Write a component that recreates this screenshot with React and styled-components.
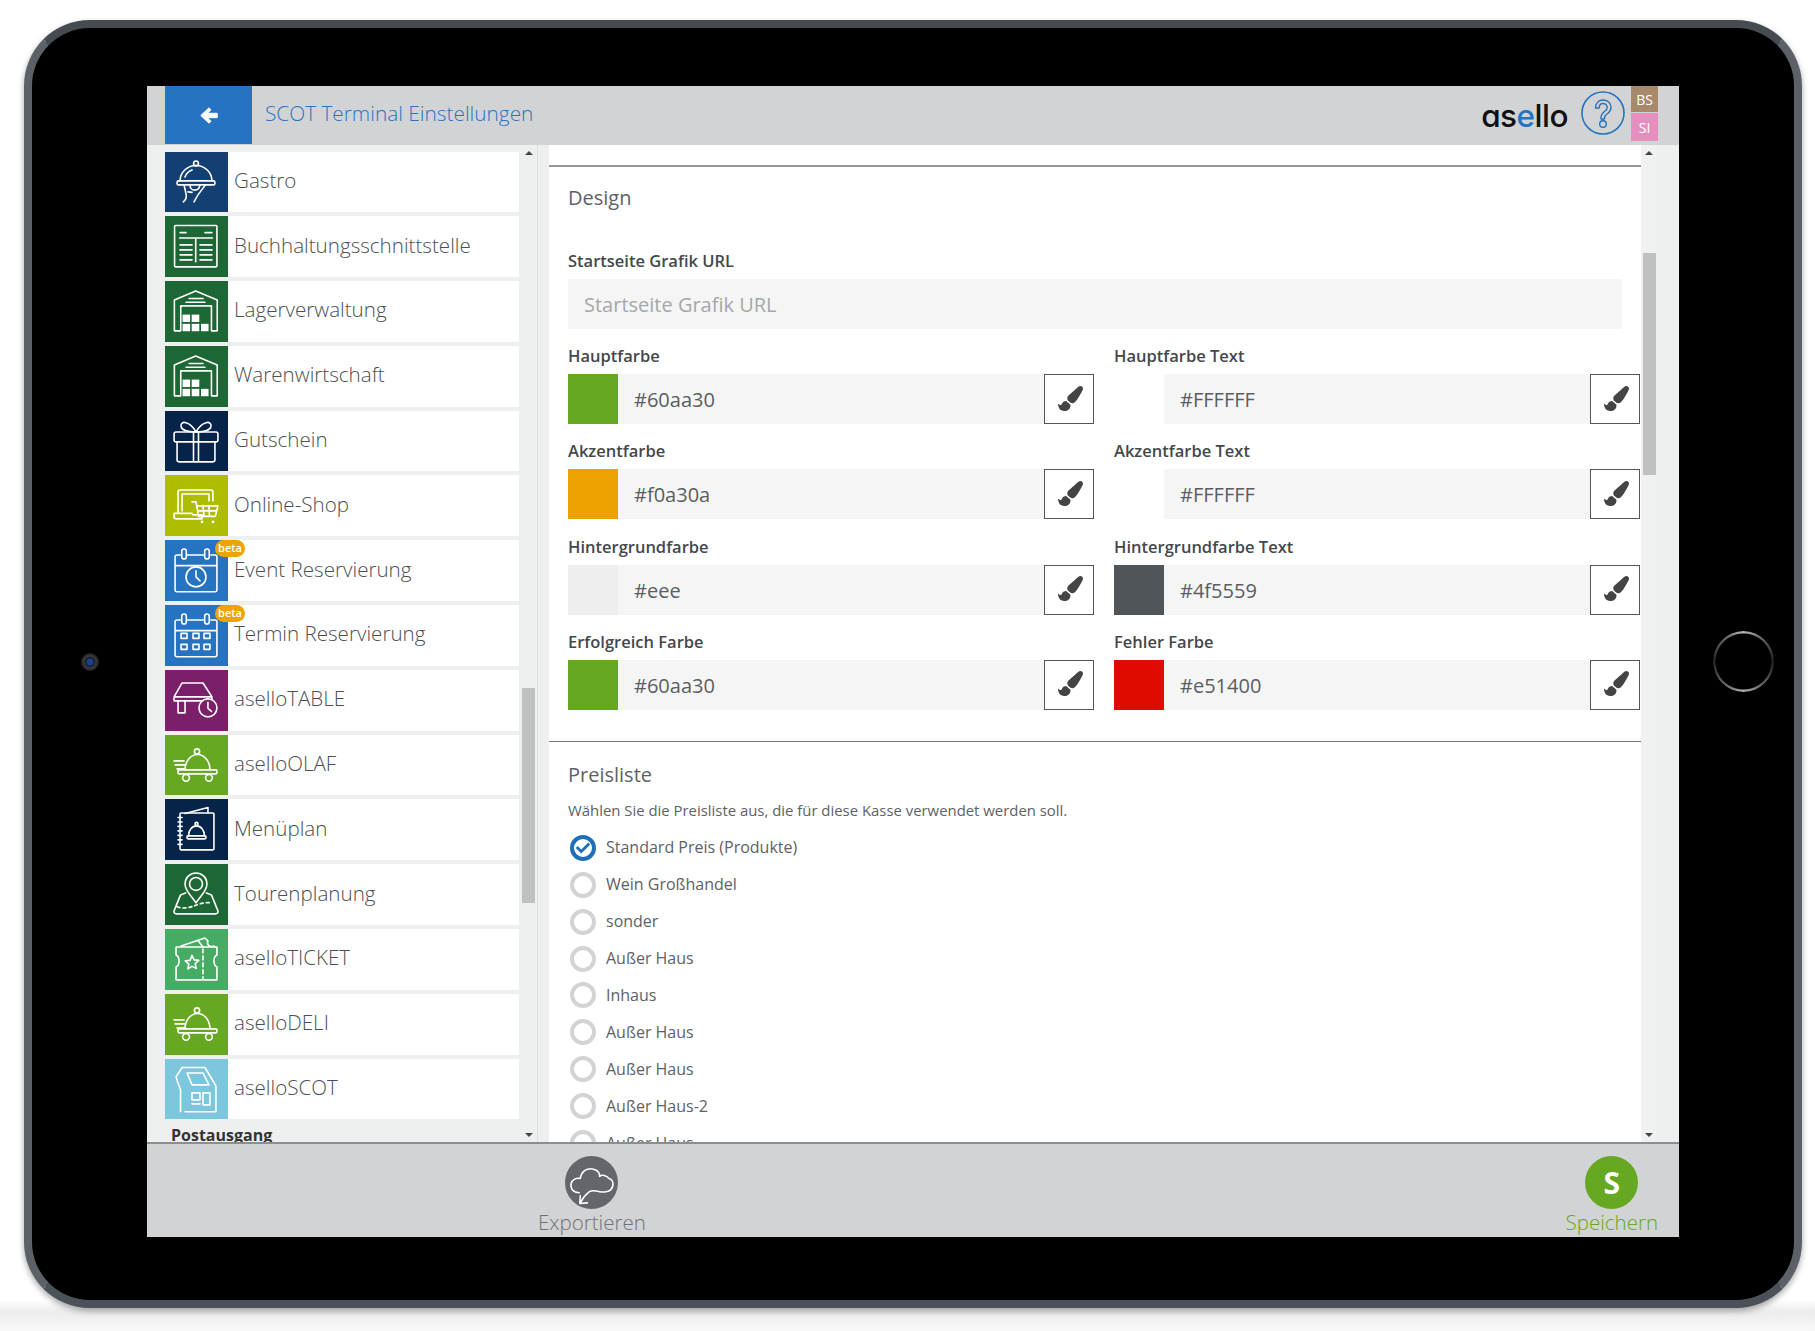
import React from 'react';
import styled, { createGlobalStyle } from 'styled-components';
import { FaPaintBrush, FaCheck } from 'react-icons/fa';

const Global = createGlobalStyle`
  html, body { margin: 0; padding: 0; background: #fff; }
  body { font-family: "Open Sans", "Liberation Sans", sans-serif; color: #4f5559; overflow: hidden; }
  * { box-sizing: border-box; }
`;

const Page = styled.div`
  width: 1815px;
  height: 1331px;
  padding: 20px 13px 0 24px;
  overflow: hidden;
  background: linear-gradient(to bottom, #fff 1300px, #ececec 1312px, #f8f8f8 1331px);
`;
const Tablet = styled.div`
  width: 1778px;
  height: 1288px;
  border-radius: 66px;
  border: 8px solid #5b6167;
  border-top-color: #454b51;
  border-bottom-color: #4a5158;
  background: #000;
  display: grid;
  grid-template-columns: 115px 1532px 1fr;
  padding: 58px 0 63px;
  box-shadow: 0 3px 6px rgba(0,0,0,.35);
`;
const Bezel = styled.div`
  display: flex;
  align-items: center;
  justify-content: center;
  padding-left: ${p => p.$shift || 0}px;
`;
const Camera = styled.div`
  width: 18px;
  height: 18px;
  border-radius: 50%;
  background: radial-gradient(circle, #1c3f86 0 3px, #101a2e 4px, #3b3b3b 6px, #1c1c1c 9px);
`;
const HomeRing = styled.div`
  width: 61px;
  height: 61px;
  border-radius: 50%;
  background: conic-gradient(#b5b5b5 0deg, #6a6a6a 35deg, #202020 90deg, #6a6a6a 145deg, #b0b0b0 180deg, #6a6a6a 215deg, #262626 270deg, #6a6a6a 325deg, #b5b5b5 360deg);
  -webkit-mask: radial-gradient(circle, transparent 27.5px, #000 28.5px);
  mask: radial-gradient(circle, transparent 27.5px, #000 28.5px);
`;
const Screen = styled.div`
  display: flex;
  flex-direction: column;
  height: 1151px;
  background: #eef0ef;
  overflow: hidden;
`;
const Header = styled.header`
  flex: 0 0 59px;
  display: flex;
  align-items: stretch;
  padding: 0 21px 0 18px;
  background: #d2d3d5;
`;
const BackButton = styled.div`
  width: 87px;
  height: 58px;
  background: #2673c1;
  display: flex;
  align-items: center;
  justify-content: center;
  svg { display: block; }
`;
const Title = styled.div`
  flex: 1;
  padding-left: 13px;
  font-size: 20.8px;
  line-height: 55px;
  color: #2a73bf;
  font-weight: 300;
`;
const Logo = styled.div`
  font-family: Inter, "Open Sans", sans-serif;
  font-feature-settings: "cv11";
  font-weight: 500;
  font-size: 31.5px;
  letter-spacing: -0.5px;
  color: #111;
  line-height: 58px;
  padding-top: 1px;
  span { color: #2673c1; }
`;
const Help = styled.svg`
  width: 44px;
  height: 44px;
  margin: 5px 0 0 13px;
`;
const Badges = styled.div`
  display: flex;
  flex-direction: column;
  gap: 1px;
  margin-left: 6px;
  width: 27px;
`;
const Badge = styled.div`
  height: ${p => p.$h}px;
  background: ${p => p.$c};
  color: #fff;
  font-size: 14px;
  display: flex;
  align-items: center;
  justify-content: center;
`;
const Main = styled.div`
  flex: 0 0 997px;
  display: flex;
  min-height: 0;
  overflow: hidden;
`;
const Sidebar = styled.aside`
  flex: 0 0 354px;
  margin-left: 18px;
  padding: 6.5px 0 0;
  overflow: hidden;
`;
const MenuList = styled.div`
  display: flex;
  flex-direction: column;
  gap: 4px;
`;
const MenuRow = styled.div`
  position: relative;
  height: 60.8px;
  background: #fff;
  display: flex;
  align-items: center;
  font-size: 20.6px;
  font-weight: 300;
  color: #4b5054;
`;
const Tile = styled.div`
  flex: 0 0 63px;
  height: 100%;
  background: ${p => p.$c};
  margin-right: 6px;
  svg { display: block; width: 63px; height: 100%; }
`;
const RowLabel = styled.span`
  padding-bottom: 4px;
`;
const Beta = styled.span`
  position: absolute;
  left: 50px;
  top: 0;
  width: 30px;
  height: 17px;
  border-radius: 9px;
  background: #eca400;
  color: #fff;
  font-size: 11px;
  font-weight: 600;
  line-height: 15px;
  text-align: center;
`;
const Postausgang = styled.div`
  font-size: 16px;
  font-weight: 700;
  color: #333;
  padding: 5px 0 0 6px;
  line-height: 22px;
`;
const Track = styled.div`
  position: relative;
  flex: 0 0 ${p => p.$w}px;
  background: ${p => p.$bg};
  border-right: ${p => p.$line ? '1px solid #e0e2e2' : 'none'};
`;
const Thumb = styled.div`
  position: absolute;
  left: ${p => p.$l}px;
  top: ${p => p.$t}px;
  width: 13px;
  height: ${p => p.$h}px;
  background: #bfc0c0;
`;
const Arrow = styled.div`
  position: absolute;
  left: ${p => p.$l}px;
  ${p => p.$down ? 'bottom: 5px;' : 'top: 6px;'}
  width: 0;
  height: 0;
  border-left: 4px solid transparent;
  border-right: 4px solid transparent;
  ${p => p.$down ? 'border-top: 4px solid #444;' : 'border-bottom: 4px solid #444;'}
`;
const Gutter = styled.div`
  flex: 0 0 ${p => p.$w}px;
`;
const Pane = styled.main`
  flex: 0 0 1092px;
  background: #fff;
  padding-top: 20px;
  overflow: hidden;
`;
const Section = styled.section`
  margin-top: ${p => p.$mt || 0}px;
  padding: ${p => p.$pt}px 0 0 19px;
  border-top: ${p => p.$thin ? 1 : 2}px solid ${p => p.$thin ? '#77797b' : '#98999b'};
`;
const SectionTitle = styled.h2`
  margin: 0;
  font-size: 20px;
  font-weight: 400;
  line-height: 28px;
  color: #5d6266;
`;
const FieldLabel = styled.div`
  font-size: 16.5px;
  font-weight: 600;
  line-height: 22px;
  color: #43484c;
  margin-bottom: 7px;
`;
const UrlLabel = styled(FieldLabel)`
  margin: 38px 0 7px;
`;
const UrlInput = styled.div`
  width: 1054px;
  height: 50px;
  background: #f5f5f5;
  color: #a5a7a9;
  font-size: 20px;
  line-height: 52px;
  padding-left: 16px;
`;
const Colors = styled.div`
  display: grid;
  grid-template-columns: 526px 526px;
  column-gap: 20px;
  row-gap: 16.3px;
  margin-top: 16px;
`;
const ColorRow = styled.div`
  display: flex;
  height: 50px;
`;
const Swatch = styled.div`
  flex: 0 0 50px;
  background: ${p => p.$c};
`;
const ColorValue = styled.div`
  flex: 1;
  background: #f5f5f5;
  font-size: 20px;
  line-height: 52px;
  padding-left: 16px;
  color: #595e62;
`;
const BrushButton = styled.div`
  flex: 0 0 50px;
  border: 1.5px solid #555;
  background: #fff;
  color: #444;
  display: flex;
  align-items: center;
  justify-content: center;
  padding: 0 0 2px 3px;
  font-size: 25px;
`;
const Hint = styled.p`
  margin: 10px 0 0;
  font-size: 14.9px;
  line-height: 22px;
  color: #5d6266;
`;
const Radios = styled.div`
  display: flex;
  flex-direction: column;
  gap: 10.9px;
  margin-top: 14px;
  padding-left: 2px;
`;
const RadioRow = styled.div`
  display: flex;
  align-items: center;
  height: 26px;
  gap: 10px;
  font-size: 16px;
  color: #5d6266;
`;
const RadioText = styled.span`
  padding-bottom: 1px;
`;
const RadioDot = styled.span`
  flex: 0 0 26px;
  height: 26px;
  border-radius: 50%;
  border: 4px solid ${p => p.$on ? '#1e6fb8' : '#d2d3d5'};
  color: #1e6fb8;
  display: flex;
  align-items: center;
  justify-content: center;
  font-size: 14px;
`;
const Footer = styled.footer`
  flex: 1;
  border-top: 2px solid #8b8d8f;
  background: #d2d3d5;
  display: flex;
  justify-content: space-between;
  padding: 12px 21px 0 391px;
`;
const Action = styled.div`
  display: flex;
  flex-direction: column;
  align-items: center;
  font-size: 20.5px;
  font-weight: 300;
  line-height: 26px;
  color: ${p => p.$c};
`;
const ActionCircle = styled.div`
  width: 53px;
  height: 53px;
  border-radius: 50%;
  background: ${p => p.$c};
  color: #fff;
  font-size: 30px;
  font-weight: 700;
  display: flex;
  align-items: center;
  justify-content: center;
  svg { display: block; }
`;

const S = ({ children }) => (
  <svg viewBox="0 0 63 61" fill="none" stroke="#fff" strokeWidth="1.6" strokeLinecap="round" strokeLinejoin="round">{children}</svg>
);
const F = { fill: '#fff', stroke: 'none' };

const Cloche = () => (
  <>
    <path d="M9 26h10M10 30h10M12 34h8" />
    <circle cx="32" cy="16.5" r="2.6" />
    <path d="M20 35a12.5 15.5 0 0 1 25 0" />
    <rect x="13" y="35" width="39" height="4" rx="1" />
    <circle cx="21" cy="43" r="3.4" />
    <circle cx="44" cy="43" r="3.4" />
  </>
);
const Warehouse = () => (
  <>
    <path d="M9.3 50V19L30.7 10 52.3 19V50H46.5V25H15.7V50Z" />
    <path d="M24 17.5h14M21 21.3h19" />
    <g style={F}>
      <rect x="17.5" y="33.7" width="7.6" height="7.4" />
      <rect x="26.7" y="33.7" width="7.6" height="7.4" />
      <rect x="17.5" y="43" width="7.6" height="7.4" />
      <rect x="26.7" y="43" width="7.6" height="7.4" />
      <rect x="36" y="43" width="7.6" height="7.4" />
    </g>
  </>
);
const CalBase = () => (
  <>
    <path d="M15.5 15H12a2 2 0 0 0-2 2V50a2 2 0 0 0 2 2H50a2 2 0 0 0 2-2V17a2 2 0 0 0-2-2H46M22.5 15H38.5M10 25.7H52" />
    <rect x="16.7" y="9" width="4.6" height="10" rx="2.3" />
    <rect x="39.7" y="9" width="4.6" height="10" rx="2.3" />
  </>
);

const icons = {
  gastro: <S>
    <circle cx="31" cy="11.5" r="2.4" />
    <path d="M15 29a16 15.5 0 0 1 32 0M20 25a12 11 0 0 1 7-7" />
    <rect x="12" y="29" width="38" height="4" rx="1.5" />
    <path d="M19 33l2 9c.8 3.5-.3 6-2.7 8M29 50L33 43l7.5-10M25 33c0 7 9 7 10 0M23 40l4 .5" />
  </S>,
  book: <S>
    <rect x="9.5" y="9.5" width="42.5" height="41.5" rx="1" />
    <path d="M15 16.700h6M40 16.700h7M14.500 22h33M30.700 22v24M15 29h12M15 34h12M15 39h12M15 44h12M35 29h12M35 34h12M35 39h12M35 44h12" />
  </S>,
  warehouse: <S><Warehouse /></S>,
  gift: <S>
    <rect x="9" y="21" width="44" height="10" rx="2" />
    <path d="M12 31V49a2 2 0 0 0 2 2H48a2 2 0 0 0 2-2V31M28.5 21V51M33.5 21V51" />
    <path d="M31 21C25 10 15 9 16 15.5 16.5 19.5 22 21 31 21ZM31 21C37 10 47 9 46 15.5 45.500 19.500 40 21 31 21Z" />
  </S>,
  shop: <S>
    <path d="M13 38V17a2 2 0 0 1 2-2H46a2 2 0 0 1 2 2V26M17 36V19H44V26" />
    <path d="M9 38.5H27L28 40H37V44H11a2 2 0 0 1-2-2Z" />
    <path d="M27 27h4l2.500 14.500H50M32 31H53l-2.500 10M38 31l1 10M44 31l.5 10M33 36h19" />
    <circle cx="37" cy="47" r="1.4" style={F} /><circle cx="48" cy="47" r="1.4" style={F} />
  </S>,
  event: <S>
    <CalBase />
    <circle cx="31" cy="37" r="10" />
    <path d="M31 31v6l4 4" />
  </S>,
  termin: <S>
    <CalBase />
    {[19, 31, 42].map(x => [31, 42].map(y => <rect key={x + '-' + y} x={x - 3} y={y - 2.5} width="6" height="5" />))}
  </S>,
  table: <S>
    <path d="M17 13H38L47 27V31H9V27ZM9 27H47" />
    <path d="M13 31V43H20V31M37 31V35" />
    <circle cx="43" cy="38" r="9" fill="#7c1f6b" />
    <path d="M43 32.5V38.5L46.5 41.5" />
  </S>,
  olaf: <S><Cloche /></S>,
  menu: <S>
    <rect x="15" y="14" width="34" height="37" rx="1" />
    <path d="M20 14.5L43 8.500V14M13 18.500h4M13 23h4M13 27.500h4M13 32h4M13 36.500h4M13 41h4M13 45.500h4" />
    <circle cx="31.5" cy="25" r="1.5" />
    <path d="M23.5 37a8 10 0 0 1 16 0" />
    <rect x="22" y="37" width="19" height="3" rx="1" />
  </S>,
  tour: <S>
    <path d="M31 39C27 33 20 27 20 20a11 11 0 0 1 22 0C42 27 35 33 31 39Z" />
    <circle cx="31" cy="20" r="6.5" />
    <path d="M20.5 29L15.500 31 9 47c-.6 1.800.8 3 2.500 3H50.500c1.700 0 3-1.200 2.500-3L46.500 31 41.500 29" />
    <path d="M12 43c6 2 12 1 17-1s12-4 18-3" strokeDasharray="3 3" />
  </S>,
  ticket: <S>
    <path d="M11 18H52V26C48 28 48 36 52 38V51H11V38C15 36 15 28 11 26Z" />
    <path d="M38 20V50" strokeDasharray="4 3" />
    <path d="M27 26.500l2 4.500 4.800.5-3.600 3.200 1 4.800L27 37.500l-4.200 2.500 1-4.800-3.600-3.200 4.800-.5Z" />
    <path d="M16 17L40 9 43 12C41 16 45 19 49 17L50 18M33 11.500L38 18" />
  </S>,
  scot: <S>
    <path d="M17 8.500H40L51 27V53H20" />
    <path d="M11 18c1.500 5 3 9 4.500 13V53M11 18L17 8.500" />
    <path d="M22 14H38L44 26H27Z" />
    <rect x="27" y="34" width="8" height="7" />
    <path d="M27 45h8" />
    <rect x="38" y="34" width="7" height="12" />
  </S>,
};

const menu = [
  ['Gastro', '#143f72', 'gastro'],
  ['Buchhaltungsschnittstelle', '#1c6733', 'book'],
  ['Lagerverwaltung', '#1c6733', 'warehouse'],
  ['Warenwirtschaft', '#1c6733', 'warehouse'],
  ['Gutschein', '#06234a', 'gift'],
  ['Online-Shop', '#afbd00', 'shop'],
  ['Event Reservierung', '#2673c1', 'event', true],
  ['Termin Reservierung', '#2673c1', 'termin', true],
  ['aselloTABLE', '#7c1f6b', 'table'],
  ['aselloOLAF', '#66a821', 'olaf'],
  ['Menüplan', '#06234a', 'menu'],
  ['Tourenplanung', '#1c6733', 'tour'],
  ['aselloTICKET', '#46ab63', 'ticket'],
  ['aselloDELI', '#66a821', 'olaf'],
  ['aselloSCOT', '#7cc6de', 'scot'],
];

const colorFields = [
  ['Hauptfarbe', '#66a821', '#60aa30'],
  ['Hauptfarbe Text', '#fff', '#FFFFFF'],
  ['Akzentfarbe', '#eca100', '#f0a30a'],
  ['Akzentfarbe Text', '#fff', '#FFFFFF'],
  ['Hintergrundfarbe', '#eeeeee', '#eee'],
  ['Hintergrundfarbe Text', '#4f5559', '#4f5559'],
  ['Erfolgreich Farbe', '#66a821', '#60aa30'],
  ['Fehler Farbe', '#e00b00', '#e51400'],
];

const prices = ['Standard Preis (Produkte)', 'Wein Großhandel', 'sonder', 'Außer Haus', 'Inhaus', 'Außer Haus', 'Außer Haus', 'Außer Haus-2', 'Außer Haus'];

export default function App() {
  return (
    <>
      <Global />
      <Page>
        <Tablet>
          <Bezel><Camera /></Bezel>
          <Screen>
            <Header>
              <BackButton>
                <svg width="18" height="17" viewBox="0 0 18 17" fill="#fff" stroke="#fff" strokeWidth="1" strokeLinejoin="round">
                  <path d="M9 .8L.8 8.500 9 16.200 11 14.200 7.500 10.700H17.200V6.300H7.500L11 2.800Z" />
                </svg>
              </BackButton>
              <Title>SCOT Terminal Einstellungen</Title>
              <Logo>as<span>e</span>llo</Logo>
              <Help viewBox="0 0 44 44" fill="none">
                <circle cx="22" cy="22" r="21" stroke="#2673c1" strokeWidth="1.6" />
                <path d="M14.500 17c0-5 3.500-8 7.500-8 4.500 0 8 3 8 7.500 0 3.500-2 5-4 6.500-1.500 1-2.500 2-2.500 4v1h-3.500v-1.500c0-3 1.500-4.500 3.500-6 1.500-1 2.800-2.200 2.800-4 0-2.200-1.800-4-4.300-4-2.300 0-3.800 1.800-3.800 4.500Z" stroke="#2673c1" strokeWidth="1.400" strokeLinejoin="round" />
                <circle cx="22" cy="33" r="3.300" stroke="#2673c1" strokeWidth="1.400" />
              </Help>
              <Badges>
                <Badge $h={26} $c="#a8896a">BS</Badge>
                <Badge $h={28} $c="#e58fbf">SI</Badge>
              </Badges>
            </Header>
            <Main>
              <Sidebar>
                <MenuList>
                  {menu.map(([label, color, icon, beta], i) => (
                    <MenuRow key={i}>
                      <Tile $c={color}>{icons[icon]}</Tile>
                      <RowLabel>{label}</RowLabel>
                      {beta && <Beta>beta</Beta>}
                    </MenuRow>
                  ))}
                </MenuList>
                <Postausgang>Postausgang</Postausgang>
              </Sidebar>
              <Track $w={19} $bg="#eef0ef" $line>
                <Arrow $l={6} />
                <Thumb $l={3} $t={543} $h={215} />
                <Arrow $l={6} $down />
              </Track>
              <Gutter $w={11} />
              <Pane>
                <Section $pt={17}>
                  <SectionTitle>Design</SectionTitle>
                  <UrlLabel>Startseite Grafik URL</UrlLabel>
                  <UrlInput>Startseite Grafik URL</UrlInput>
                  <Colors>
                    {colorFields.map(([label, c, val]) => (
                      <div key={label}>
                        <FieldLabel>{label}</FieldLabel>
                        <ColorRow>
                          <Swatch $c={c} />
                          <ColorValue>{val}</ColorValue>
                          <BrushButton><FaPaintBrush /></BrushButton>
                        </ColorRow>
                      </div>
                    ))}
                  </Colors>
                </Section>
                <Section $pt={19} $thin $mt={31}>
                  <SectionTitle>Preisliste</SectionTitle>
                  <Hint>Wählen Sie die Preisliste aus, die für diese Kasse verwendet werden soll.</Hint>
                  <Radios>
                    {prices.map((p, i) => (
                      <RadioRow key={i}>
                        <RadioDot $on={i === 0}>{i === 0 && <FaCheck />}</RadioDot>
                        <RadioText>{p}</RadioText>
                      </RadioRow>
                    ))}
                  </Radios>
                </Section>
              </Pane>
              <Track $w={16} $bg="#f1f1f1">
                <Arrow $l={4} />
                <Thumb $l={2} $t={108} $h={222} />
                <Arrow $l={4} $down />
              </Track>
              <Gutter $w={22} />
            </Main>
            <Footer>
              <Action $c="#6f7276">
                <ActionCircle $c="#63676b">
                  <svg width="53" height="53" viewBox="0 0 52 52" fill="none" stroke="#fff" strokeWidth="1.5" strokeLinecap="round" strokeLinejoin="round">
                    <path d="M14 36C8 36 5 32 6 27 7 23 11 21 15 22 16 15 22 11 28 13 32 14 34 17 34 20 36 18 41 19 43 22 48 23 48 30 45 33 43 35 38 36 34 35 30 34 27 33 24 35 20 38 17 42 15 46M15 39L14.500 46.500 22 46" />
                  </svg>
                </ActionCircle>
                Exportieren
              </Action>
              <Action $c="#66a821">
                <ActionCircle $c="#66a821">S</ActionCircle>
                Speichern
              </Action>
            </Footer>
          </Screen>
          <Bezel $shift={13}><HomeRing /></Bezel>
        </Tablet>
      </Page>
    </>
  );
}
